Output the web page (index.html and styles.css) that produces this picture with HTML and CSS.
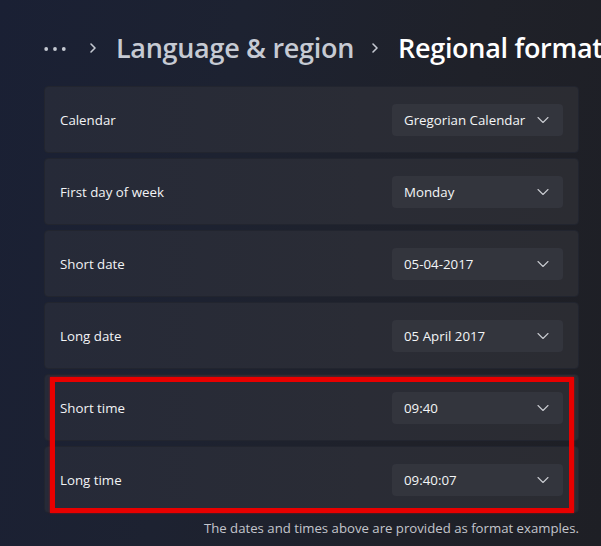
FILE: index.html
```html
<!DOCTYPE html>
<html lang="en">
<head>
<meta charset="utf-8">
<title>Regional format</title>
<link rel="stylesheet" href="styles.css">
</head>
<body>
<div class="page">
  <header class="crumbs">
    <svg class="dots" width="22" height="6" viewBox="0 0 22 6"><circle cx="2.2" cy="3" r="1.9" fill="#c5c9d2"/><circle cx="11" cy="3" r="1.9" fill="#c5c9d2"/><circle cx="19.8" cy="3" r="1.9" fill="#c5c9d2"/></svg>
    <svg class="sep" width="8" height="12" viewBox="0 0 8 12"><polyline points="2,2 6,6 2,10" fill="none" stroke="#c5c9d2" stroke-width="1.6" stroke-linecap="round" stroke-linejoin="round"/></svg>
    <span class="crumb">Language &amp; region</span>
    <svg class="sep" width="8" height="12" viewBox="0 0 8 12"><polyline points="2,2 6,6 2,10" fill="none" stroke="#c5c9d2" stroke-width="1.6" stroke-linecap="round" stroke-linejoin="round"/></svg>
    <span class="crumb current">Regional format</span>
  </header>

  <main class="list">
    <div class="card"><span class="label">Calendar</span><div class="select"><span>Gregorian Calendar</span><svg class="chev" width="12" height="8" viewBox="0 0 12 8"><polyline points="1,1.5 6,6.5 11,1.5" fill="none" stroke="#c8cad0" stroke-width="1.1" stroke-linecap="round" stroke-linejoin="round"/></svg></div></div>
    <div class="card"><span class="label">First day of week</span><div class="select"><span>Monday</span><svg class="chev" width="12" height="8" viewBox="0 0 12 8"><polyline points="1,1.5 6,6.5 11,1.5" fill="none" stroke="#c8cad0" stroke-width="1.1" stroke-linecap="round" stroke-linejoin="round"/></svg></div></div>
    <div class="card"><span class="label">Short date</span><div class="select"><span>05-04-2017</span><svg class="chev" width="12" height="8" viewBox="0 0 12 8"><polyline points="1,1.5 6,6.5 11,1.5" fill="none" stroke="#c8cad0" stroke-width="1.1" stroke-linecap="round" stroke-linejoin="round"/></svg></div></div>
    <div class="card"><span class="label">Long date</span><div class="select"><span>05 April 2017</span><svg class="chev" width="12" height="8" viewBox="0 0 12 8"><polyline points="1,1.5 6,6.5 11,1.5" fill="none" stroke="#c8cad0" stroke-width="1.1" stroke-linecap="round" stroke-linejoin="round"/></svg></div></div>
    <div class="group">
      <div class="card"><span class="label">Short time</span><div class="select"><span>09:40</span><svg class="chev" width="12" height="8" viewBox="0 0 12 8"><polyline points="1,1.5 6,6.5 11,1.5" fill="none" stroke="#c8cad0" stroke-width="1.1" stroke-linecap="round" stroke-linejoin="round"/></svg></div></div>
      <div class="card"><span class="label">Long time</span><div class="select"><span>09:40:07</span><svg class="chev" width="12" height="8" viewBox="0 0 12 8"><polyline points="1,1.5 6,6.5 11,1.5" fill="none" stroke="#c8cad0" stroke-width="1.1" stroke-linecap="round" stroke-linejoin="round"/></svg></div></div>
      <div class="highlight"></div>
    </div>
    <p class="note">The dates and times above are provided as format examples.</p>
  </main>
</div>
</body>
</html>
```

FILE: styles.css
```css
html, body {
  margin: 0;
  padding: 0;
}
body {
  width: 601px;
  height: 546px;
  overflow: hidden;
  background: linear-gradient(100deg, #1a2034 0%, #1d2231 35%, #1f2129 70%, #1e1f25 100%);
  font-family: "Segoe UI", "Open Sans", "Noto Sans", sans-serif;
  color: #ffffff;
}
.page {
  padding: 0 22px 0 44px;
}
.crumbs {
  display: flex;
  align-items: center;
  height: 86px;
  padding-top: 9px;
  box-sizing: border-box;
  white-space: nowrap;
  width: 557px;
  overflow: hidden;
}
.dots {
  flex: none;
  margin-right: 23px;
  margin-top: 2px;
}
.sep {
  flex: none;
  margin-right: 19px;
}
.crumb {
  flex: none;
  font-size: 27px;
  font-weight: 600;
  color: #c6cad3;
  letter-spacing: -0.3px;
  margin-right: 17px;
}
.crumb.current {
  color: #ffffff;
  margin-right: 0;
}
.list {
  display: flex;
  flex-direction: column;
  gap: 5px;
  width: 535px;
}
.group {
  position: relative;
  display: flex;
  flex-direction: column;
  gap: 5px;
}
.card {
  height: 67px;
  box-sizing: border-box;
  display: flex;
  align-items: center;
  justify-content: space-between;
  padding: 0 15px 0 15px;
  background: linear-gradient(90deg, #262a38 0%, #2a2c35 60%, #2b2c32 100%);
  border-radius: 4px;
  border: 1px solid #22252f;
}
.label {
  font-size: 13.3px;
  color: #f2f3f5;
}
.select {
  width: 171px;
  height: 32px;
  box-sizing: border-box;
  display: flex;
  align-items: center;
  justify-content: space-between;
  padding: 0 14px 0 12px;
  background: #33353d;
  border-radius: 4px;
  font-size: 13.3px;
  color: #f4f5f7;
}
.chev {
  flex: none;
}
.highlight {
  position: absolute;
  left: 6px;
  top: 3px;
  width: 524px;
  height: 136px;
  box-sizing: border-box;
  border: 5px solid #e80000;
  box-shadow: 0 0 2px rgba(232,0,0,0.6);
  pointer-events: none;
}
.note {
  margin: 1px 0 0 0;
  text-align: right;
  font-size: 13.2px;
  line-height: 18px;
  color: #c3c5cc;
}
```
